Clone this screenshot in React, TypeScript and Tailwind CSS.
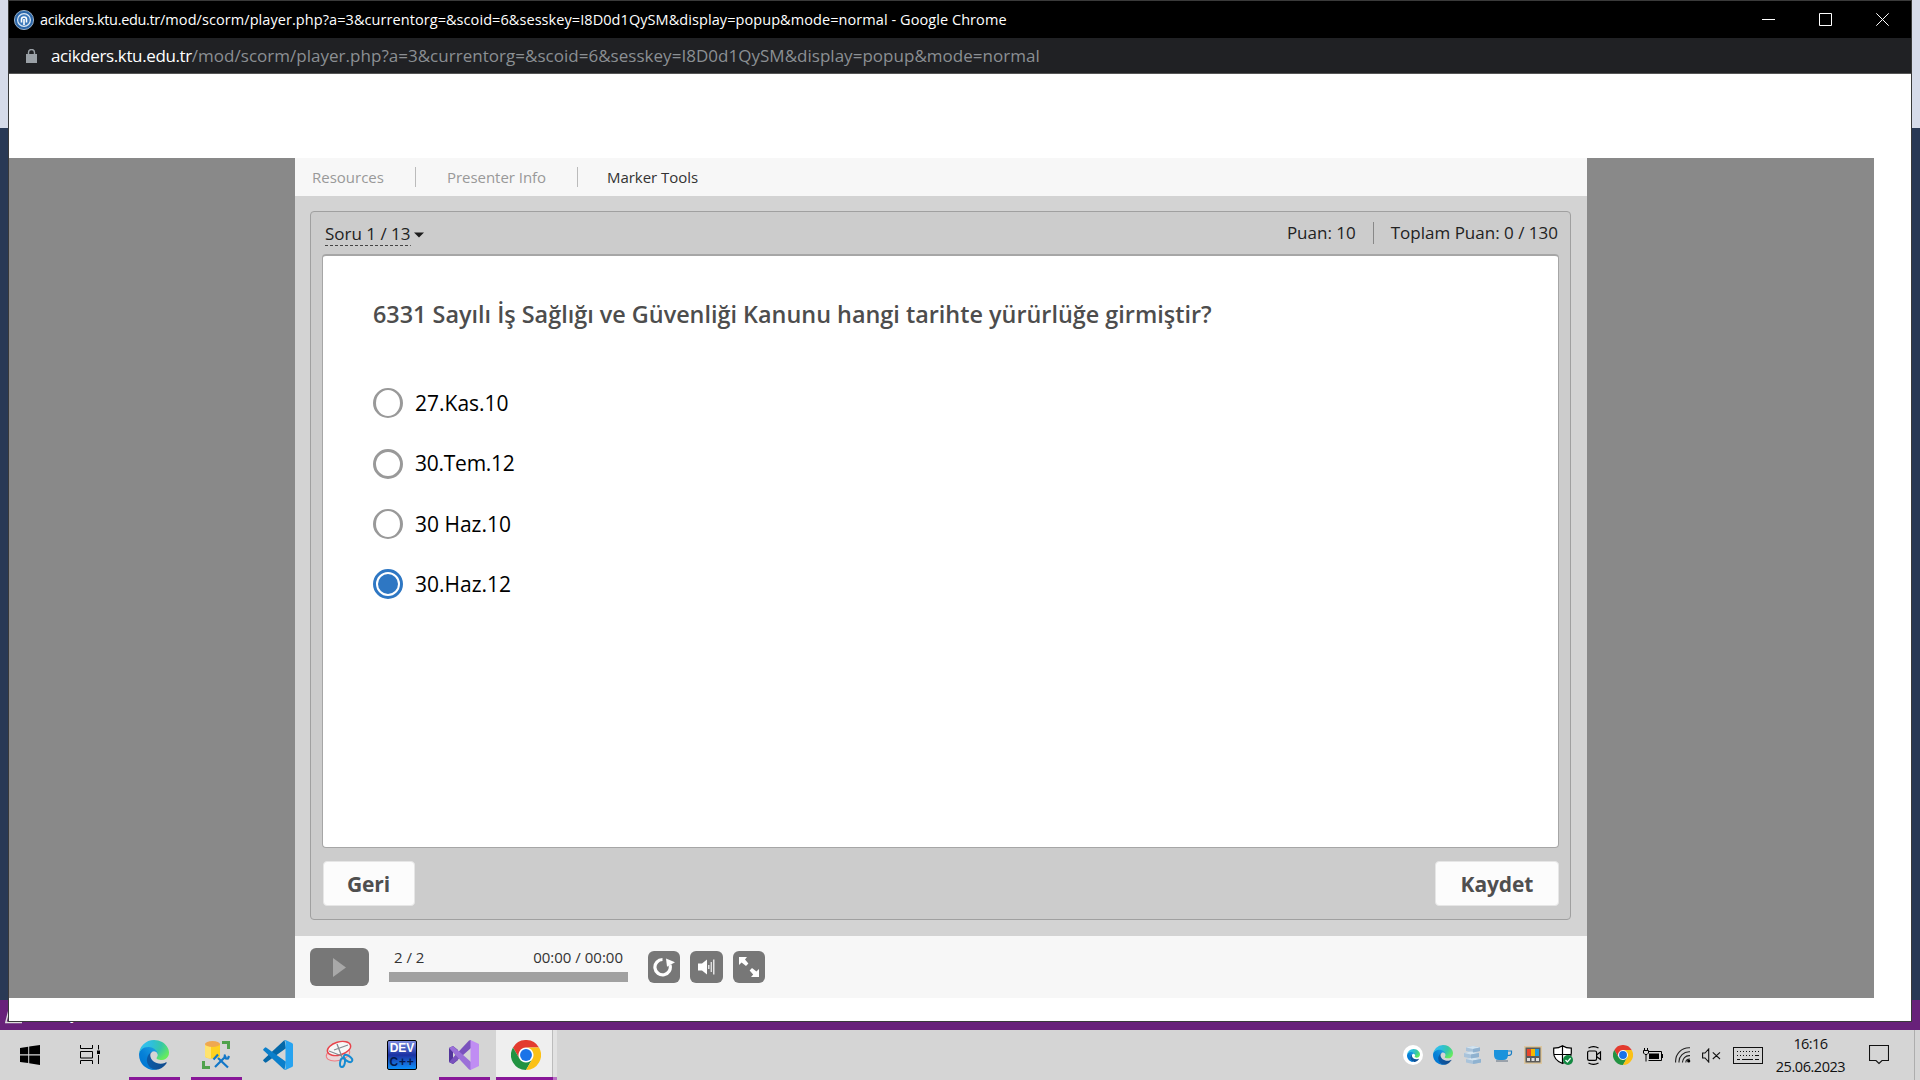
import React from "react";

const OPTIONS = [
  { label: "27.Kas.10", checked: false, thick: false, h: "h-[60px]", track: "tracking-normal" },
  { label: "30.Tem.12", checked: false, thick: true, h: "h-[61px]", track: "tracking-[-0.25px]" },
  { label: "30 Haz.10", checked: false, thick: false, h: "h-[60px]", track: "tracking-normal" },
  { label: "30.Haz.12", checked: true, thick: false, h: "h-[60px]", track: "tracking-normal" },
];

function EdgeIcon({ size, id }: { size: number; id: string }) {
  return (
    <svg width={size} height={size} viewBox="0 0 256 256" className="shrink-0">
      <defs>
        <linearGradient id={id + "a"} x1="0.2" y1="0.5" x2="1" y2="0.5">
          <stop offset="0" stopColor="#0c59a4" />
          <stop offset="1" stopColor="#114a8b" />
        </linearGradient>
        <linearGradient id={id + "b"} x1="0.9" y1="0.2" x2="0.3" y2="0.9">
          <stop offset="0" stopColor="#1b9de2" />
          <stop offset="0.6" stopColor="#0680d7" />
          <stop offset="1" stopColor="#0078d4" />
        </linearGradient>
        <radialGradient id={id + "c"} cx="0.1" cy="0.2" r="1">
          <stop offset="0" stopColor="#35c1f1" />
          <stop offset="0.35" stopColor="#2fbfd9" />
          <stop offset="0.65" stopColor="#36c7a8" />
          <stop offset="1" stopColor="#66eb5e" />
        </radialGradient>
      </defs>
      <path transform="translate(-4.63 -4.92)" fill={`url(#${id}a)`} d="M235.68 195.46a93.73 93.73 0 0 1-10.54 4.71 101.87 101.87 0 0 1-35.9 6.46c-47.32 0-88.54-32.55-88.54-74.32A31.48 31.48 0 0 1 117.13 105c-42.8 1.8-53.8 46.4-53.8 72.53 0 73.88 68.09 81.37 82.76 81.37 7.91 0 19.84-2.3 27-4.56l1.31-.44a128.34 128.34 0 0 0 66.6-52.8 4 4 0 0 0-5.32-5.64Z" />
      <path fill={`url(#${id}b)`} d="M105.73 241.42A79.2 79.2 0 0 1 83 220.08a80.72 80.72 0 0 1 29.5-120.77c3.12-1.47 8.45-4.06 15.63-4.09a32.36 32.36 0 0 1 25.69 13 31.88 31.88 0 0 1 6.36 18.66c0-.21 24.46-79.62-80-79.62-43.9 0-80 41.66-80 78.21a130.15 130.15 0 0 0 12.11 56 128 128 0 0 0 156.38 67.11 75.55 75.55 0 0 1-62.78-8Z" />
      <path fill={`url(#${id}c)`} d="M152.33 148.86c-.81 1.05-3.3 2.5-3.3 5.66 0 2.61 1.7 5.12 4.72 7.23 14.38 10 41.49 8.68 41.56 8.68a59.56 59.56 0 0 0 30.27-8.35A61.38 61.38 0 0 0 256 109.2c.26-22.41-8-37.31-11.34-43.91C223.46 23.84 177.72 0 128 0A128 128 0 0 0 0 126.2c.48-36.54 36.8-66.05 80-66.05 3.5 0 23.46.34 42 10.07 16.34 8.58 24.9 18.94 30.85 29.21 6.18 10.67 7.28 24.15 7.28 29.52s-2.74 13.33-7.8 19.91Z" />
    </svg>
  );
}

function ChromeIcon({ size }: { size: number }) {
  return (
    <svg width={size} height={size} viewBox="0 0 48 48" className="shrink-0">
      <circle cx="24" cy="24" r="12" fill="#fff" />
      <path fill="#e33b2e" d="M3.2 12A24 24 0 0 1 44.8 12L24 12A12 12 0 0 0 13.6 30Z" />
      <path fill="#229342" d="M24 48A24 24 0 0 1 3.2 12L13.6 30A12 12 0 0 0 34.4 30Z" />
      <path fill="#fbc116" d="M44.8 12A24 24 0 0 1 24 48L34.4 30A12 12 0 0 0 24 12Z" />
      <circle cx="24" cy="24" r="9.5" fill="#1a73e8" />
    </svg>
  );
}

function TaskCell({ children, active, open }: { children: React.ReactNode; active?: boolean; open?: boolean }) {
  return (
    <div className="relative flex h-full w-[62px] items-center justify-center">
      {active && (
        <div className="absolute inset-y-0 left-[1px] flex w-[61px]">
          <div className="w-[56px] bg-[#efefef]" />
          <div className="w-px bg-[#bcbcbc]" />
          <div className="w-[4px] bg-[#e2e2e2]" />
        </div>
      )}
      <div className="relative">{children}</div>
      {open && <div className="absolute bottom-0 left-[6px] h-[3px] w-[51px] bg-[#881798]" />}
      {active && (
        <div className="absolute bottom-0 left-[1px] flex h-[3px]">
          <div className="w-[57px] bg-[#881798]" />
          <div className="w-[4px] bg-[#ba72c4]" />
        </div>
      )}
    </div>
  );
}

function Tray({ children }: { children: React.ReactNode }) {
  return <div className="flex h-full w-[30px] items-center justify-center">{children}</div>;
}

function ToolButton({ children, className }: { children: React.ReactNode; className: string }) {
  return <button className={"flex h-[32px] items-center justify-center rounded-[6px] bg-[#777] " + className}>{children}</button>;
}

function Taskbar() {
  return (
    <footer className="flex h-[50px] bg-[#d5d5d5]">
      <div className="flex w-[60px] items-center justify-center">
        <svg width="20" height="20" viewBox="0 0 20 20" fill="#000">
          <path d="M0 3L8.2 1.8V9.3H0ZM9.2 1.6L20 0V9.3H9.2ZM0 10.4H8.2V18L0 16.9ZM9.2 10.4H20V20L9.2 18.3Z" />
        </svg>
      </div>
      <div className="mr-[3px] flex w-[60px] items-center justify-center">
        <svg width="20" height="20" viewBox="0 0 20 20" fill="none" stroke="#000">
          <path d="M.5 0V3.5H12.5V0M.5 19V15.5H12.5V19M.5 6.5H12.5V13H.5ZM18.5 0V4.5M18.5 10V19" />
          <path d="M17 5.5H20V9H17Z" fill="#000" stroke="none" />
        </svg>
      </div>
      <TaskCell open><EdgeIcon size={30} id="task" /></TaskCell>
      <TaskCell open>
        <svg width="30" height="30" viewBox="0 0 30 30">
          <path d="M4 4V16C4 18 8 18.6 11 18.6S19 18 19 16V4Z" fill="#ffd21f" />
          <path d="M4 4V16C4 17.6 7 18.4 10 18.5V5Z" fill="#ffe36e" />
          <ellipse cx="11.5" cy="4" rx="7.5" ry="3" fill="#efa850" />
          <path d="M21 1H29V9H26V4H21Z" fill="#4fa24c" />
          <path d="M1 21H4V26H9V29H1Z" fill="#4fa24c" />
          <path d="M14 27L25 16M17 18L27 27.5M12.5 19.5L17 14.5M24 14.5Q22.5 19 27 18.5L28 16" fill="none" stroke="#1277c8" strokeWidth="2.2" />
        </svg>
      </TaskCell>
      <TaskCell>
        <svg width="30" height="30" viewBox="0 0 30 30">
          <path d="M21.5 0L23 8.3L3.5 22.3Q2.6 23 1.8 22.3L.5 21Q-.3 20.2.6 19.4Z" fill="#0568a8" />
          <path d="M21.5 30L23 21.7L3.5 7.7Q2.6 7 1.8 7.7L.5 9Q-.3 9.8.6 10.6Z" fill="#0b7fcb" />
          <path d="M21.5 0Q22.2-.2 23 .2L29 3Q30 3.6 30 4.6V25.4Q30 26.4 29 27L23 29.8Q22.2 30.2 21.5 30Q22.5 29.6 22.5 28V2Q22.5.4 21.5 0Z" fill="#27a3f0" />
        </svg>
      </TaskCell>
      <TaskCell>
        <svg width="30" height="30" viewBox="0 0 30 30" fill="none">
          <ellipse cx="13" cy="14" rx="12" ry="6.5" transform="rotate(-14 13 14)" fill="#ead7d9" stroke="#ee7d83" />
          <ellipse cx="14" cy="8.5" rx="12" ry="6.5" transform="rotate(-16 14 8.5)" fill="#f7f7f7" stroke="#e8434b" strokeWidth="1.4" />
          <path d="M12 4L17 17M4 11L17 16M23 5L9 10" stroke="#858b91" strokeWidth="1.3" />
          <ellipse cx="17.5" cy="22.5" rx="2.4" ry="4.6" transform="rotate(10 17.5 22.5)" stroke="#168bd2" strokeWidth="2" />
          <ellipse cx="23" cy="18.5" rx="2.6" ry="4.8" transform="rotate(-55 23 18.5)" stroke="#168bd2" strokeWidth="2" />
        </svg>
      </TaskCell>
      <TaskCell>
        <div className="flex h-[30px] w-[30px] flex-col items-center overflow-hidden rounded-[2px] border border-black bg-linear-to-b from-[#7f8de0] via-[#1b31a3] to-[#0a90fa] font-['Liberation_Sans'] text-[12px] leading-[14px] font-bold">
          <span className="text-white">DEV</span>
          <span className="tracking-[0.8px] text-[#041a4d]">C++</span>
        </div>
      </TaskCell>
      <TaskCell open>
        <svg width="30" height="30" viewBox="0 0 30 30">
          <path d="M0 8L4 6L9 10V20L4 24L0 22ZM4 11V19L7 15Z" fill="#52359a" fillRule="evenodd" />
          <path d="M0 22L4 24L22 8V0L20 .5Z" fill="#7a52bd" />
          <path d="M0 8L4 6L22 22V30L20 29.5Z" fill="#9b70d8" />
          <path d="M21.5 0L30 4V26L21.5 30Z" fill="#c08df3" />
        </svg>
      </TaskCell>
      <TaskCell active><ChromeIcon size={30} /></TaskCell>

      <div className="ml-auto flex h-full">
        <Tray>
          <div className="flex h-5 w-5 items-center justify-center rounded-full bg-white"><EdgeIcon size={13} id="beta" /></div>
        </Tray>
        <Tray><EdgeIcon size={20} id="tray" /></Tray>
        <Tray>
          <svg width="18" height="18" viewBox="0 0 18 18">
            <path d="M2 1.5L9 0L16 1.5V5L9 6.5L2 5ZM0 7L7 5.5L15 7V11L7 12.5L0 11ZM2 13L9 11.5L17 13V16.5L9 18L2 16.5Z" fill="#a9c3da" />
            <path d="M2 1.5L9 0L16 1.5L9 3ZM0 7L7 5.5L15 7L7 8.5ZM2 13L9 11.5L17 13L9 14.5Z" fill="#d3e4f0" />
            <path d="M9 3L16 1.5V5L9 6.5ZM7 8.5L15 7V11L7 12.5ZM9 14.5L17 13V16.5L9 18Z" fill="#8fb2d0" />
          </svg>
        </Tray>
        <Tray>
          <svg width="19" height="13" viewBox="0 0 19 13">
            <path d="M0 1H14V6Q14 11 9 11H5Q0 11 0 6Z" fill="#1b93dc" />
            <path d="M14 2H17.5V4Q17.5 6.5 13.5 6.5" fill="none" stroke="#1b7fc4" strokeWidth="1.2" />
            <path d="M2 12H14" stroke="#5f6f80" />
          </svg>
        </Tray>
        <Tray>
          <svg width="18" height="18" viewBox="0 0 18 18">
            <path d="M0 0H18V18H0Z" fill="#dcc7a0" />
            <path d="M1.5 1.5H16.5V16.5H1.5Z" fill="#5a5a5a" />
            <path d="M3 3H7V10H3Z" fill="#e8452c" />
            <path d="M7 3H11V10H7Z" fill="#f5b800" />
            <path d="M11 3H15V10H11Z" fill="#1c9be0" />
            <path d="M3 12H6V15H3ZM7.5 12H10.5V15H7.5ZM12 12H15V15H12Z" fill="#ddd" />
          </svg>
        </Tray>
        <Tray>
          <svg width="20" height="20" viewBox="0 0 20 20">
            <path d="M9.5.7Q13 3.2 18.3 3.2V8Q18.3 15 9.5 18.5Q.7 15 .7 8V3.2Q6 3.2 9.5.7ZM9.5 1V18M.7 9.5H18" fill="#fff" stroke="#000" strokeWidth="1.2" />
            <circle cx="15" cy="15" r="5" fill="#148a43" />
            <path d="M12.5 15L14.4 16.9L17.6 13.3" fill="none" stroke="#fff" strokeWidth="1.3" />
          </svg>
        </Tray>
        <Tray>
          <svg width="15" height="19" viewBox="0 0 15 19" fill="none" stroke="#000" strokeWidth="1.2" className="ml-[2px]">
            <rect x=".6" y="5" width="9" height="9.4" rx="1.6" />
            <path d="M9.8 8.8L13.5 6V13.5L9.8 10.8M1.5 2Q6.5-.8 11.5 2M1.5 17Q6.5 19.8 11.5 17" />
          </svg>
        </Tray>
        <Tray><ChromeIcon size={20} /></Tray>
        <Tray>
          <svg width="20" height="14" viewBox="0 0 20 14" fill="none" stroke="#000">
            <path d="M4.5 3.5H18.5V12.5H5.5M19.5 6V10M1.5 0V2.5M4.5 0V2.5M3 6V13.5" />
            <path d="M.5 2.5H5.5V5L4 6.5H2L.5 5Z" fill="#d5d5d5" />
            <path d="M6 5.5H16V11H6Z" fill="#000" stroke="none" />
          </svg>
        </Tray>
        <Tray>
          <svg width="16" height="16" viewBox="0 0 16 16" fill="none" stroke="#222" strokeWidth="1.1">
            <path d="M.6 15.5V14A13.4 13.4 0 0 1 14 .8H15M4 15.5V14.5A10 10 0 0 1 14 4.8H15M7.5 15.5V15A6.7 6.7 0 0 1 14 8.6H15M10.8 15.5Q10.8 12 15 12" />
            <circle cx="13.7" cy="14" r="1.6" fill="#000" stroke="none" />
          </svg>
        </Tray>
        <Tray>
          <svg width="19" height="15" viewBox="0 0 19 15" fill="none" stroke="#111" strokeWidth="1.1" className="mr-[3px]">
            <path d="M.6 5H3L6.7 1V14L3 10H.6ZM10.8 4.3L18 11M18 4.3L10.8 11" />
          </svg>
        </Tray>
        <div className="flex w-[40px] items-center justify-center">
          <svg width="30" height="17" viewBox="0 0 30 17" fill="none" stroke="#111">
            <rect x=".5" y=".5" width="29" height="16" />
            <path d="M4 4.5H27M4 8.5H27" strokeDasharray="1 2" />
            <path d="M4 12.5H7M9 12.5H20M22 12.5H26M22 8.5H26" />
          </svg>
        </div>
        <div className="flex w-[85px] flex-col items-center pt-[2px] font-['Open_Sans'] text-[14.5px] leading-[23px] text-[#111]">
          <span className="tracking-[-0.55px]">16:16</span>
          <span className="tracking-[-0.45px]">25.06.2023</span>
        </div>
        <div className="ml-px flex w-[50px] items-center justify-center">
          <svg width="20" height="20" viewBox="0 0 20 20" fill="none" stroke="#111" strokeWidth="1.1">
            <path d="M.5.5H19.5V15.5H13L10 18.5L7 15.5H.5Z" />
          </svg>
        </div>
        <div className="mr-[5px] ml-[10px] w-px bg-[#adadad]" />
      </div>
    </footer>
  );
}

function Slide() {
  return (
    <section className="flex h-[840px] w-[1292px] flex-col bg-[#d3d3d3] font-['Open_Sans']">
      <nav className="flex h-[38px] items-center bg-[#f7f7f7] pl-[17px] text-[15px] leading-none text-[#999]">
        <span className="w-[103px]">Resources</span>
        <div className="h-5 w-px bg-[#bbb]" />
        <span className="ml-[31px] w-[130px] tracking-[-0.04px]">Presenter Info</span>
        <div className="h-5 w-px bg-[#bbb]" />
        <span className="ml-[29px] tracking-[-0.03px] text-[#333]">Marker Tools</span>
      </nav>
      <div className="mt-[15px] mr-[16px] mb-[16px] ml-[15px] flex h-[709px] flex-col rounded-[4px] border border-[#a0a0a0] bg-[#ccc] px-[11px]">
        <div className="flex h-[42px] items-center text-[17px] text-[#222]">
          <span className="mt-[3px] ml-[3px] h-[23px] bg-[repeating-linear-gradient(to_right,#444_0_3px,transparent_3px_5px)] bg-[length:100%_1px] bg-bottom bg-no-repeat leading-[21px]">Soru 1 / 13</span>
          <svg width="10" height="6" viewBox="0 0 10 6" className="mt-[4px] ml-[3px]"><path d="M0 .5H10L5 5.5Z" fill="#1c1c1c" /></svg>
          <span className="ml-auto">Puan: 10</span>
          <div className="mx-[17px] h-[22px] w-px bg-[#888]" />
          <span className="mr-[1px]">Toplam Puan: 0 / 130</span>
        </div>
        <main className="h-[594px] rounded-[4px] border border-t-2 border-[#a6a6a6] bg-white pl-[50px]">
          <h1 className="mt-[39px] text-[23.4px] leading-[38px] font-semibold text-[#4d4d4d]">
            6331 Sayılı İş Sağlığı ve Güvenliği Kanunu hangi tarihte yürürlüğe girmiştir?
          </h1>
          <div className="mt-[40px]">
            {OPTIONS.map((o) => (
              <label key={o.label} className={"flex items-center gap-[12px] text-[21px] text-black " + o.h}>
                {o.checked ? (
                  <span className="flex h-[30px] w-[30px] items-center justify-center rounded-full border-[3px] border-[#2e77c3]">
                    <span className="h-[20px] w-[20px] rounded-full bg-[#2e77c3]" />
                  </span>
                ) : (
                  <span className={"h-[30px] w-[30px] rounded-full border-[#999] " + (o.thick ? "border-[3px]" : "border-x-[3px] border-y-2")} />
                )}
                <span className={"pt-px " + o.track}>{o.label}</span>
              </label>
            ))}
          </div>
        </main>
        <div className="flex justify-between pt-[13px] pl-[1px] text-[21px] font-bold tracking-[-0.1px] text-[#4f4f4f]">
          <button className="h-[45px] w-[92px] rounded-[4px] border border-[#e6e6e6] bg-[#fcfcfc] pt-[2px] pr-px">Geri</button>
          <button className="h-[45px] w-[124px] rounded-[4px] border border-[#e6e6e6] bg-[#fcfcfc] pt-[2px]">Kaydet</button>
        </div>
      </div>
      <div className="flex h-[62px] bg-[#f7f7f7] pl-[15px]">
        <button className="mt-[12px] flex h-[38px] w-[59px] items-center justify-center rounded-[6px] bg-[#777]">
          <svg width="13" height="19" viewBox="0 0 13 19"><path d="M0 0L13 9.5L0 19Z" fill="#a8a8a8" /></svg>
        </button>
        <div className="mt-[11px] ml-[20px] w-[239px]">
          <div className="flex h-[25px] justify-between pr-[5px] pl-[5px] text-[15px] leading-[21px] text-[#333]">
            <span>2 / 2</span>
            <span>00:00 / 00:00</span>
          </div>
          <div className="h-[10px] bg-[#a1a1a1]" />
        </div>
        <div className="mt-[15px] ml-[20px] flex gap-[10px]">
          <ToolButton className="w-[32px]">
            <svg width="22" height="20" viewBox="0 0 22 20">
              <path d="M9.5 2.5A7.7 7.7 0 1 0 17 8" fill="none" stroke="#fff" strokeWidth="3.2" />
              <path d="M13 1.5L22 5.3L14 9.8Z" fill="#fff" />
            </svg>
          </ToolButton>
          <ToolButton className="w-[33px]">
            <svg width="17" height="16" viewBox="0 0 17 16">
              <path d="M0 4.5H4L9 .5V15.5L4 11.5H0Z" fill="#fff" />
              <path d="M10.8 6V10" stroke="#fff" strokeWidth="1.2" />
              <path d="M13.3 3V13" stroke="#ddd" strokeWidth="1.4" />
              <path d="M15.8.5V15.5" stroke="#fff" strokeWidth="1.2" />
            </svg>
          </ToolButton>
          <ToolButton className="w-[32px]">
            <svg width="20" height="20" viewBox="0 0 20 20" fill="#fff">
              <path d="M0 0H8L6 2.4L9.4 6.6L7 9L2.6 5.6L0 8ZM20 20H12L14.2 17.6L10.6 13.4L13 11L17.4 14.4L20 12Z" />
            </svg>
          </ToolButton>
        </div>
      </div>
    </section>
  );
}

export default function App() {
  return (
    <div className="relative flex h-[1080px] w-[1920px] flex-col overflow-hidden">
      <div className="h-[128px] bg-[#d6dbe9]" />
      <div className="h-[872px] bg-[#293955]" />
      <div className="flex h-[30px] bg-[#68217a] pl-[5px] text-white">
        <svg width="18" height="24" viewBox="0 0 18 24" fill="none" stroke="#ddd" strokeWidth="1.4"><path d="M4.5 8L.8 22.5H17" /></svg>
        <span className="ml-[12px] pt-[3px] font-['Open_Sans'] text-[15px] leading-[20px]">Ready</span>
      </div>
      <Taskbar />
      <div className="absolute top-0 left-[8px] flex h-[1022px] w-[1904px] flex-col border border-[#3a3a3a] bg-white">
        <header className="flex h-[37px] items-center bg-black font-['Open_Sans'] text-[14.5px] text-white">
          <svg width="20" height="20" viewBox="0 0 20 20" className="mt-[1px] ml-[5px]">
            <circle cx="10" cy="10" r="9.6" fill="#2b66a8" stroke="#b5cbe2" strokeWidth=".8" />
            <circle cx="10" cy="10" r="6.4" fill="#3b78ba" stroke="#dce8f4" strokeWidth="1.2" />
            <path d="M7.5 12.5V9.5Q7.5 7 10 7T12.5 9.5V12.5M10 9V15" fill="none" stroke="#fff" strokeWidth="1.6" />
          </svg>
          <span className="ml-[6px] whitespace-nowrap tracking-[0.07px]">
            <span className="tracking-[-0.33px]">acikders.ktu.edu.tr</span>/mod/scorm/player.php?a=3&amp;currentorg=&amp;scoid=6&amp;sesskey=I8D0d1QySM&amp;display=popup&amp;mode=normal - Google Chrome
          </span>
          <div className="mr-[22px] ml-auto flex gap-[44px]">
            <svg width="13" height="13" viewBox="0 0 13 13"><path d="M0 6.5H13" stroke="#fff" /></svg>
            <svg width="13" height="13" viewBox="0 0 13 13"><path d="M.5.5H12.5V12.5H.5Z" fill="none" stroke="#fff" /></svg>
            <svg width="13" height="13" viewBox="0 0 13 13"><path d="M.3.3L12.7 12.7M12.7.3L.3 12.7" stroke="#fff" /></svg>
          </div>
        </header>
        <div className="flex h-[36px] items-center border-b border-[#555] bg-[#202124] font-['Open_Sans'] text-[17px] text-[#9aa0a6]">
          <svg width="11" height="14" viewBox="0 0 11 14" className="ml-[17px]">
            <path d="M0 5H11V14H0Z" fill="#9aa0a6" />
            <path d="M2.5 5.5V3.5A3 3 0 0 1 8.5 3.5V5.5" fill="none" stroke="#9aa0a6" strokeWidth="1.4" />
          </svg>
          <span className="ml-[14px] tracking-[-0.38px] text-white">acikders.ktu.edu.tr</span>
          <span className="tracking-[0.025px] text-[#8b8f93]">/mod/scorm/player.php?a=3&amp;currentorg=&amp;scoid=6&amp;sesskey=I8D0d1QySM&amp;display=popup&amp;mode=normal</span>
        </div>
        <div className="mt-[84px] flex h-[840px] w-[1865px] bg-[#898989] pl-[286px]">
          <Slide />
        </div>
      </div>
    </div>
  );
}
